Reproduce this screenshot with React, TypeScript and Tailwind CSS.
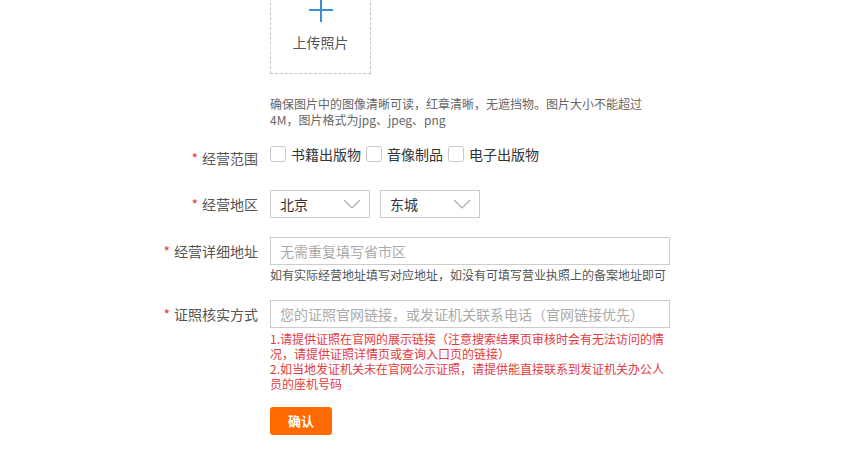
import React from 'react';

const font = { fontFamily: '"Noto Sans CJK SC", "Noto Sans", sans-serif' };

const Label: React.FC<{ text: string; className?: string }> = ({ text, className }) => (
  <div className={`w-[258px] shrink-0 text-right text-[14px] leading-4 text-[#555] ${className ?? ''}`}>
    <span className="mr-[4px] text-[#e4393c]">*</span>
    {text}
  </div>
);

const Chevron = () => (
  <svg width="18" height="10" viewBox="0 0 18 10" fill="none">
    <path d="M1 1l8 8 8-8" stroke="#aaa" strokeWidth="1.2" />
  </svg>
);

const Select: React.FC<{ value: string }> = ({ value }) => (
  <div className="flex h-[28px] w-[100px] items-center justify-between border border-[#ccc] bg-white pl-[9px] pr-[8px] text-[14px] text-[#333]">
    <span>{value}</span>
    <Chevron />
  </div>
);

const Checkbox: React.FC<{ label: string }> = ({ label }) => (
  <label className="mr-[5px] flex h-[16px] items-center gap-[5px] text-[14px] leading-4 text-[#333]">
    <span className="h-[16px] w-[16px] rounded-[3px] border border-[#c8c8c8] bg-white" />
    {label}
  </label>
);

export default function App() {
  return (
    <div className="min-h-[476px] w-[849px] overflow-hidden bg-white" style={font}>
      <div className="-mt-[27px]">
        {/* upload */}
        <div className="flex">
          <div className="w-[270px] shrink-0" />
          <div className="flex h-[101px] w-[101px] flex-col items-center border border-dashed border-[#c4c4c4]">
            <svg width="24" height="24" viewBox="0 0 24 24" className="mt-[24px]">
              <path d="M12 0v24M0 12h24" stroke="#3d8fd4" strokeWidth="2" />
            </svg>
            <span className="mt-[12px] text-[14px] leading-4 text-[#555]">上传照片</span>
          </div>
        </div>
        <div className="flex">
          <div className="w-[270px] shrink-0" />
          <p className="mt-[22px] whitespace-nowrap text-[12px] leading-4 text-[#666]">
            确保图片中的图像清晰可读，红章清晰，无遮挡物。图片大小不能超过
            <br />
            4M，图片格式为jpg、jpeg、png
          </p>
        </div>

        {/* 经营范围 */}
        <div className="mt-[18px] flex h-[16px] items-start">
          <Label text="经营范围" className="mt-[4px]" />
          <div className="ml-[12px] flex items-center">
            <Checkbox label="书籍出版物" />
            <Checkbox label="音像制品" />
            <Checkbox label="电子出版物" />
          </div>
        </div>

        {/* 经营地区 */}
        <div className="mt-[28px] flex items-center">
          <Label text="经营地区" />
          <div className="ml-[12px] flex gap-[10px]">
            <Select value="北京" />
            <Select value="东城" />
          </div>
        </div>

        {/* 经营详细地址 */}
        <div className="mt-[19px] flex items-center">
          <Label text="经营详细地址" />
          <div className="ml-[12px] flex h-[28px] w-[400px] items-center border border-[#ccc] px-[9px] text-[14px] text-[#aaa]">
            无需重复填写省市区
          </div>
        </div>
        <div className="mt-[2px] flex">
          <div className="w-[270px] shrink-0" />
          <p className="whitespace-nowrap text-[12px] leading-4 text-[#555]">
            如有实际经营地址填写对应地址，如没有可填写营业执照上的备案地址即可
          </p>
        </div>

        {/* 证照核实方式 */}
        <div className="mt-[17px] flex items-center">
          <Label text="证照核实方式" />
          <div className="ml-[12px] flex h-[28px] w-[400px] items-center border border-[#ccc] px-[9px] text-[14px] text-[#aaa]">
            您的证照官网链接，或发证机关联系电话（官网链接优先）
          </div>
        </div>
        <div className="mt-[3px] flex">
          <div className="w-[270px] shrink-0" />
          <p className="whitespace-nowrap text-[12px] leading-[15px] text-[#e4393c]">
            1.请提供证照在官网的展示链接（注意搜索结果页审核时会有无法访问的情
            <br />
            况，请提供证照详情页或查询入口页的链接）
            <br />
            2.如当地发证机关未在官网公示证照，请提供能直接联系到发证机关办公人
            <br />
            员的座机号码
          </p>
        </div>

        {/* submit */}
        <div className="mt-[16px] flex">
          <div className="w-[270px] shrink-0" />
          <button className="h-[28px] w-[62px] rounded-[3px] bg-[#ff6a00] text-[13px] font-bold text-white">
            确认
          </button>
        </div>
      </div>
    </div>
  );
}
